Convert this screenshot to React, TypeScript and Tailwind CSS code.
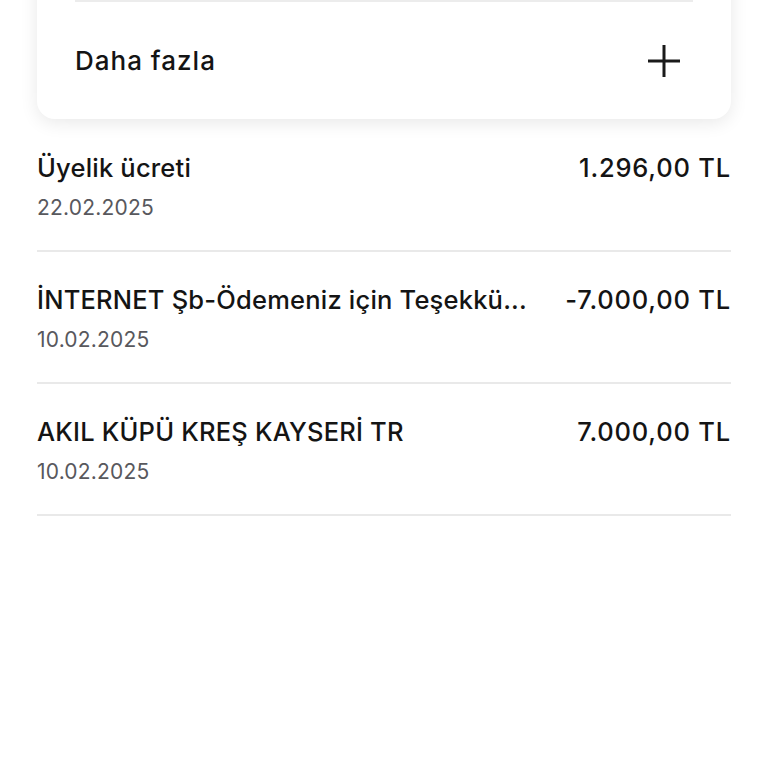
import React from "react";

const rows = [
  { title: "Üyelik ücreti", date: "22.02.2025", main: "1.296", dec: ",00 TL" },
  { title: "İNTERNET Şb-Ödemeniz için Teşekkü...", date: "10.02.2025", main: "-7.000", dec: ",00 TL" },
  { title: "AKIL KÜPÜ KREŞ KAYSERİ TR", date: "10.02.2025", main: "7.000", dec: ",00 TL" },
];

export default function App() {
  return (
    <div
      className="w-[768px] h-[768px] overflow-hidden bg-white text-[#141414]"
      style={{ fontFamily: "Inter, 'Noto Sans', sans-serif" }}
    >
      <div className="mx-[37px] -mt-[40px] rounded-[18px] bg-white shadow-[0_4px_18px_rgba(0,0,0,0.09)]">
        <div className="h-[40px]" />
        <div className="mx-[38px] h-[2px] bg-[#ececec]" />
        <div className="flex h-[117px] items-center justify-between pl-[38px] pr-[50px]">
          <span className="text-[26px] font-medium tracking-[1px]">Daha fazla</span>
          <svg width="34" height="34" viewBox="0 0 34 34">
            <path d="M17 1V33M1 17H33" stroke="#1a1a1a" strokeWidth="3" />
          </svg>
        </div>
      </div>
      <div className="mx-[37px] mt-px">
        {rows.map((r, i) => (
          <div key={i}>
            <div className="pt-[32px] pb-[28px]">
              <div className="flex h-[32px] items-center justify-between gap-[24px]">
                <span className="whitespace-nowrap text-[25.5px] font-medium leading-[32px] tracking-[0.2px]">
                  {r.title}
                </span>
                <span className="shrink-0 whitespace-nowrap text-[25.5px] font-medium leading-[32px] tracking-[0.8px]">
                  {r.main}
                  <span>{r.dec}</span>
                </span>
              </div>
              <div className="mt-[10px] h-[28px] text-[21px] leading-[28px] tracking-[0.2px] text-[#58585d]">{r.date}</div>
            </div>
            <div className="h-[2px] bg-[#e9e9e9]" />
          </div>
        ))}
      </div>
    </div>
  );
}
